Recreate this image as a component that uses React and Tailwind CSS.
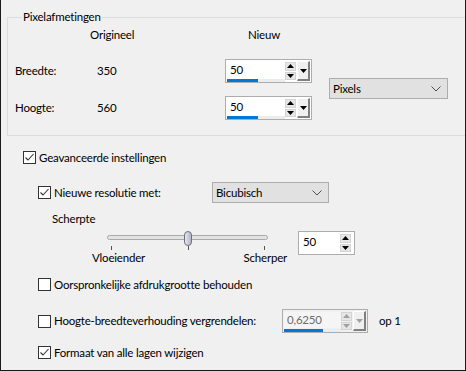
import React from 'react';

function Arrow({ dir = 'down', color = '#000' }) {
  return (
    <svg width="7" height="4" viewBox="0 0 7 4">
      {dir === 'up' ? (
        <polygon points="0,4 7,4 3.5,0" fill={color} />
      ) : (
        <polygon points="0,0 7,0 3.5,4" fill={color} />
      )}
    </svg>
  );
}

function UpDown({ disabled }) {
  const c = disabled ? '#a0a0a0' : '#000';
  return (
    <div className="flex flex-col gap-[1px] py-[2px] w-[11px]">
      <div className="h-[9px] flex items-center justify-center bg-[#e6e6e6] border border-[#d4d4d4]">
        <Arrow dir="up" color={c} />
      </div>
      <div className="h-[9px] flex items-center justify-center bg-[#e6e6e6] border border-[#d4d4d4]">
        <Arrow dir="down" color={c} />
      </div>
    </div>
  );
}

function DropBtn({ disabled }) {
  return (
    <div className="my-[1px] ml-[1px] mr-[1px] w-[13px] flex items-center justify-center bg-[#f0f0f0] border-l border-t border-l-white border-t-white border-r-2 border-b-2 border-r-[#808080] border-b-[#808080]">
      <Arrow color={disabled ? '#a0a0a0' : '#000'} />
    </div>
  );
}

function Spin({ value, className, bar = true, dropdown = true, disabled = false }) {
  return (
    <div className={`flex h-[24px] border border-[#adadad] ${disabled ? 'bg-[#f0f0f0]' : 'bg-white'} ${className}`}>
      <div className="flex-1 flex flex-col pl-[1px] pt-[2px]">
        <div className={`pl-[3px] h-[16px] leading-[16px] ${disabled ? 'text-[#6d6d6d] bg-[#f5f5f5]' : 'text-black'}`}>{value}</div>
        {bar && (
          <div className="mt-[1px] h-[3px] flex bg-[#ececec]">
            <div className={disabled ? 'w-[39px] bg-[#0078d7]' : 'w-[31px] bg-[#0078d7]'} />
          </div>
        )}
      </div>
      <UpDown disabled={disabled} />
      {dropdown ? <DropBtn disabled={disabled} /> : <div className="w-[3px]" />}
    </div>
  );
}

function Select({ value, className }) {
  return (
    <div className={`h-[21px] flex items-center justify-between bg-[#e1e1e1] border border-[#adadad] pl-[3px] pr-[6px] ${className}`}>
      <span>{value}</span>
      <svg width="10" height="6" viewBox="0 0 10 6">
        <polyline points="0.5,0.5 5,5 9.5,0.5" fill="none" stroke="#505050" strokeWidth="1" />
      </svg>
    </div>
  );
}

function Check({ checked, label }) {
  return (
    <label className="flex items-center gap-[3px] whitespace-nowrap h-[13px]">
      <span className="w-[13px] h-[13px] shrink-0 border border-[#333] bg-white flex items-center justify-center">
        {checked && (
          <svg width="11" height="11" viewBox="0 0 11 11">
            <polyline points="1.5,5.5 4,8 9.5,2" fill="none" stroke="#333" strokeWidth="1.1" />
          </svg>
        )}
      </span>
      <span>{label}</span>
    </label>
  );
}

export default function App() {
  return (
    <div className="w-[466px] h-[371px] bg-[#f0f0f0] border-x border-b border-[#1a1a1a] overflow-hidden text-[11.5px] tracking-[-0.2px] leading-[16px] text-black whitespace-nowrap" style={{ fontFamily: 'Lato, "Liberation Sans", sans-serif' }}>
      {/* Pixelafmetingen */}
      <fieldset className="ml-[6px] mr-[-2px] mt-[9px] h-[127px] border border-[#dcdcdc] pl-[7px] pt-[2px]">
        <legend className="ml-[7px] px-[1px]">Pixelafmetingen</legend>
        <div className="flex">
          <div className="flex flex-col">
            <div className="flex h-[16px]">
              <span className="ml-[75px] w-[158px]">Origineel</span>
              <span>Nieuw</span>
            </div>
            <div className="flex items-center mt-[16px] h-[24px]">
              <span className="w-[82px]">Breedte:</span>
              <span className="w-[128px]">350</span>
              <Spin value="50" className="w-[87px]" />
            </div>
            <div className="flex items-center mt-[13px] h-[24px]">
              <span className="w-[82px]">Hoogte:</span>
              <span className="w-[128px]">560</span>
              <Spin value="50" className="w-[87px]" />
            </div>
          </div>
          <Select value="Pixels" className="w-[119px] ml-[17px] mt-[51px]" />
        </div>
      </fieldset>

      <div className="pl-[22px] mt-[15px]">
        <Check checked label="Geavanceerde instellingen" />
      </div>

      <div className="pl-[37px] mt-[18px] h-[21px] flex items-center">
        <div className="w-[174px]">
          <Check checked label="Nieuwe resolutie met:" />
        </div>
        <Select value="Bicubisch" className="w-[117px]" />
      </div>

      <div className="pl-[51px] mt-[8px] h-[16px]">Scherpte</div>

      {/* Scherpte slider */}
      <div className="flex">
        <div className="ml-[91px] w-[195px] flex flex-col">
          <div className="relative ml-[15px] w-[162px] h-[23px]">
            <div className="absolute left-0 top-[8px] w-[161px] h-[5px] rounded-full border border-[#a9a9a9] bg-[#e2e2e2]" />
            <div className="absolute left-[4px] top-[19px] w-[1px] h-[4px] bg-[#555]" />
            <div className="absolute left-[81px] top-[19px] w-[1px] h-[4px] bg-[#555]" />
            <div className="absolute left-[157px] top-[19px] w-[1px] h-[4px] bg-[#555]" />
            <div className="absolute left-[77px] top-[4px] w-[8px] h-[15px] rounded-[4px] border border-[#6f6f7a] bg-gradient-to-r from-[#e8e8f2] via-[#cdcdda] to-[#b4b4c4]" />
          </div>
          <div className="flex justify-between h-[16px]">
            <span>Vloeiender</span>
            <span>Scherper</span>
          </div>
        </div>
        <Spin value="50" bar={false} dropdown={false} className="w-[57px] ml-[11px] mt-[4px]" />
      </div>

      <div className="pl-[37px] mt-[12px]">
        <Check label="Oorspronkelijke afdrukgrootte behouden" />
      </div>

      <div className="pl-[37px] mt-[18px] h-[24px] flex items-center">
        <div className="w-[244px]">
          <Check label="Hoogte-breedteverhouding vergrendelen:" />
        </div>
        <Spin value="0,6250" disabled className="w-[86px]" />
        <span className="ml-[11px]">op 1</span>
      </div>

      <div className="pl-[37px] mt-[13px]">
        <Check checked label="Formaat van alle lagen wijzigen" />
      </div>
    </div>
  );
}
